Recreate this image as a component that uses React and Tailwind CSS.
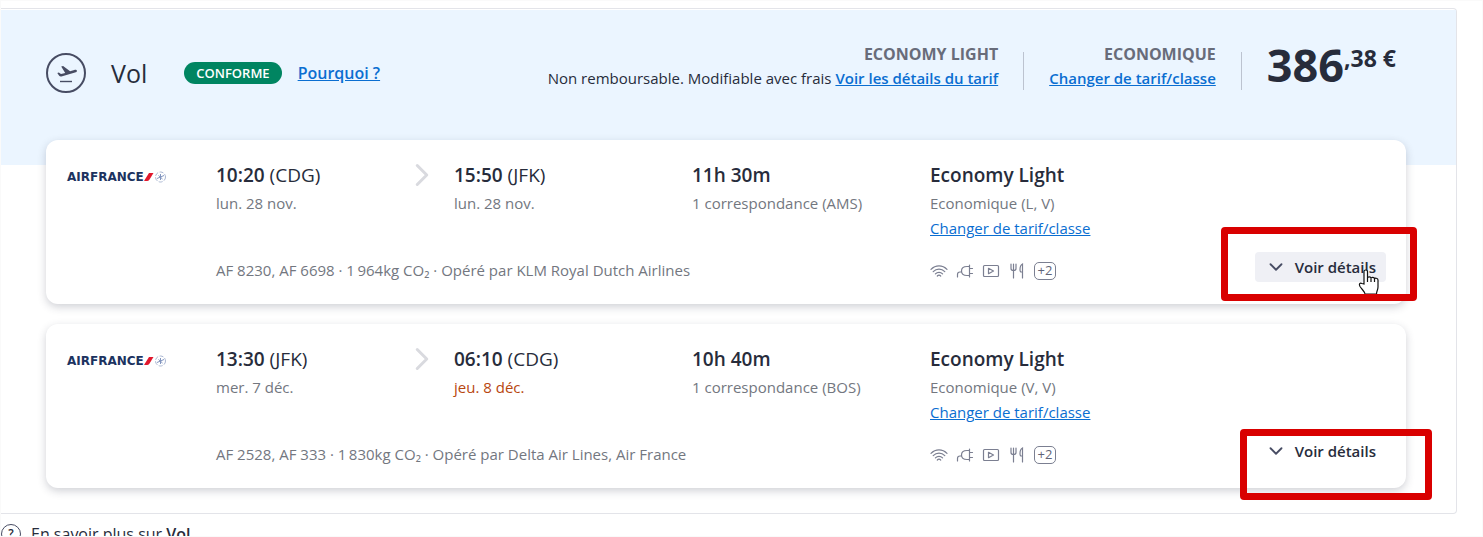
import { ChevronDown, ChevronRight } from "lucide-react";

const flights = [
  {
    id: 1,
    departure: { time: "10:20", airport: "CDG", date: "lun. 28 nov." },
    arrival: { time: "15:50", airport: "JFK", date: "lun. 28 nov." },
    duration: "11h 30m",
    stops: "1 correspondance (AMS)",
    cabin: "Economique (L, V)",
    summary: "AF 8230, AF 6698 · 1\u2009964kg CO₂ · Opéré par KLM Royal Dutch Airlines",
    hovered: true,
  },
  {
    id: 2,
    departure: { time: "13:30", airport: "JFK", date: "mer. 7 déc." },
    arrival: { time: "06:10", airport: "CDG", date: "jeu. 8 déc.", nextDay: true },
    duration: "10h 40m",
    stops: "1 correspondance (BOS)",
    cabin: "Economique (V, V)",
    summary: "AF 2528, AF 333 · 1\u2009830kg CO₂ · Opéré par Delta Air Lines, Air France",
    hovered: false,
  },
];

function PlaneBadge() {
  return (
    <svg width="40" height="40" viewBox="0 0 40 40" fill="none" className="shrink-0">
      <circle cx="20" cy="20" r="19" stroke="#474c63" strokeWidth="2" />
      <path
        d="M11.300 19.900l1.500-.4 2.200 1.600 4.200-1.200-4-6.400 1.900-.5 7 5.200 4.200-1.200c1.300-.3 2.400-.1 2.600.7.200.9-.7 1.500-1.900 1.900l-13.600 3.900c-1 .2-1.700 0-2.200-.7z"
        fill="#474c63"
      />
      <path d="M14 28.500h12" stroke="#474c63" strokeWidth="1.400" />
    </svg>
  );
}

function AirFranceLogo() {
  return (
    <div className="flex items-center">
      <span className="font-['DejaVu_Sans'] text-[12px] leading-4 font-bold text-[#1c3360]">
        AIRFRANCE
      </span>
      <svg width="22" height="14" viewBox="0 0 22 14" fill="none" className="shrink-0">
        <path d="M0 11L5 3h4.500l-4 6.500Q4.500 11 3 11z" fill="#e1182d" />
        <g stroke="#a9b6d2">
          <circle cx="16.500" cy="7" r="5" strokeDasharray="4 1.500" />
          <path d="M13 8.500l7-3M14.500 5.500l4 3.500M16.500 4v6" stroke="#8295bf" />
        </g>
      </svg>
    </div>
  );
}

function Amenities() {
  return (
    <div className="flex h-[18px] items-center gap-2 text-[#7b7f91]">
      <svg width="18" height="18" viewBox="0 0 18 18" fill="none" stroke="currentColor" strokeWidth="1.200" strokeLinecap="round">
        <path d="M1 7.300C5.500 2.600 12.500 2.600 17 7.300M3.200 9.600c3.300-3.400 8.300-3.400 11.600 0M5.400 11.900c2.100-2.100 5.100-2.100 7.200 0M7.300 14c1.100-1 2.300-1 3.400 0" />
      </svg>
      <svg width="18" height="18" viewBox="0 0 18 18" fill="none" stroke="currentColor" strokeWidth="1.200" strokeLinecap="round">
        <path d="M1.500 15v-2.500c0-1.800.9-2.500 2.400-2.500H5.500M13.500 3v12M13.500 4.500H11C7.500 4.500 5.500 6.500 5.500 9s2 4.500 5.500 4.500h2.500M14 6.500h2.500M14 11.500h2.500" />
      </svg>
      <svg width="18" height="18" viewBox="0 0 18 18" fill="none" stroke="currentColor" strokeWidth="1.200" strokeLinejoin="round">
        <rect x="1.500" y="3.500" width="15" height="11" rx="1" />
        <path d="M6.500 6.300v5.400L11.500 9z" />
      </svg>
      <svg width="18" height="18" viewBox="0 0 18 18" fill="none" stroke="currentColor" strokeWidth="1.200" strokeLinecap="round">
        <path d="M3 2v4.500C3 8 4 8.500 5.500 8.500S8 8 8 6.500V2M5.500 2v14M14.500 16V2c-1.700.8-2.500 3-2.500 5.500 0 1.600.5 2.500 1.200 2.500h1.300" />
      </svg>
      <span className="flex h-[18px] w-[22px] items-center justify-center rounded-[5px] border border-[#7b7f91] text-[13px] text-[#5f6478]">
        +2
      </span>
    </div>
  );
}

function HandCursor() {
  return (
    <svg
      width="22"
      height="26"
      viewBox="0 0 22 26"
      className="pointer-events-none absolute top-[17px] right-[7px] z-10"
    >
      <path
        d="M7 15V2.500C7 .5 10.500.5 10.500 2.500V9c0-1.500 3.500-1.500 3.500.5 0-1.500 3.500-1.500 3.500.5 0-1.300 3.500-1 3.500 1V18c0 3-1.500 4-1.500 7H8c0-2-3-4.500-5-7.500-1.500-2.500 0-4 2-3z"
        fill="#fff"
        stroke="#111"
        strokeWidth="1.200"
      />
      <path d="M10.500 9v4M14 9.500V13M17.500 10v3" stroke="#111" strokeWidth="1.200" />
    </svg>
  );
}

function Stop({ time, airport, date, nextDay }) {
  return (
    <div>
      <p className="text-[19px] leading-7 text-[#272c3b]">
        <span className="font-semibold">{time}</span> ({airport})
      </p>
      <p
        className={`text-[15px] leading-7 ${
          nextDay ? "text-[#b8470f]" : "text-[#73777f]"
        }`}
      >
        {date}
      </p>
    </div>
  );
}

function FlightCard({ flight }) {
  return (
    <article className="relative flex rounded-xl bg-white pt-[21px] pb-5 shadow-[0_3px_8px_rgba(40,44,70,0.22)]">
      <div className="w-[170px] shrink-0 pt-2 pl-[21px]">
        <AirFranceLogo />
      </div>

      <div className="grid flex-1 grid-cols-5">
        <div className="flex justify-between pr-[13px]">
          <Stop {...flight.departure} />
          <ChevronRight size={38} strokeWidth={3} absoluteStrokeWidth className="-mt-[5px] text-[#d9dadf]" />
        </div>

        <Stop {...flight.arrival} />

        <div>
          <p className="text-[19px] leading-7 font-semibold text-[#272c3b]">{flight.duration}</p>
          <p className="text-[15px] leading-7 text-[#73777f]">{flight.stops}</p>
        </div>

        <div className="col-span-2">
          <p className="text-[19px] leading-7 font-semibold text-[#272c3b]">Economy Light</p>
          <p className="text-[15px] leading-7 text-[#73777f]">{flight.cabin}</p>
          <a href="#tarif" className="block text-[15px] leading-[22px] text-[#0a6ed1] underline">
            Changer de tarif/classe
          </a>
        </div>

        <p className="col-span-3 self-end text-[15px] leading-7 text-[#73777f]">
          {flight.summary}
        </p>

        <div className="self-end pb-1">
          <Amenities />
        </div>

        <div className="mt-[13px] flex justify-end pr-5 pb-[2px]">
          <div className="relative">
            <button
              type="button"
              className={`flex h-[30px] items-center gap-2 rounded px-[10px] text-[15px] font-semibold text-[#272c3b] ${
                flight.hovered ? "bg-[#eff0f5]" : "bg-white"
              }`}
            >
              <ChevronDown size={22} className="text-[#474c63]" />
              Voir détails
            </button>
            {flight.hovered && <HandCursor />}
          </div>
        </div>
      </div>

      {/* Highlight frame around the details button */}
      <div
        className={`pointer-events-none absolute z-20 rounded border-[7px] border-[#d90000] ${
          flight.hovered
            ? "-right-[11px] bottom-[3px] h-[74px] w-[196px]"
            : "-right-[26px] -bottom-3 h-[71px] w-[192px]"
        }`}
      />
    </article>
  );
}

export default function App() {
  return (
    <div className="h-screen overflow-hidden border border-[#fafafa] bg-white pt-[7px] font-['Open_Sans',sans-serif]">
      <section className="mr-[25px] rounded-r border border-l-0 border-[#e3e4e9] pt-px pb-[25px]">
        <header className="flex h-[155px] items-start bg-[#ebf5ff] pr-[60px] pl-[45px]">
          <div className="flex flex-1 items-center pt-[43px]">
            <PlaneBadge />
            <h1 className="ml-[25px] text-[25px] leading-8 font-medium text-[#272c3b]">Vol</h1>
            <span className="ml-[37px] rounded-full bg-[#008561] px-3 text-[13px] leading-[22px] font-semibold text-white">
              CONFORME
            </span>
            <a href="#pourquoi" className="ml-4 text-base font-semibold text-[#0a6ed1] underline">
              Pourquoi ?
            </a>
          </div>

          <div className="mt-8 pr-[25px] text-right text-[15px] leading-6">
            <p className="text-base font-bold text-[#686c7a]">ECONOMY LIGHT</p>
            <p className="text-[#272c3b]">
              Non remboursable. Modifiable avec frais{" "}
              <a href="#details-tarif" className="font-semibold text-[#0a6ed1] underline">
                Voir les détails du tarif
              </a>
            </p>
          </div>

          <div className="mt-[42px] h-[38px] w-px bg-[#bcc3d0]" />

          <div className="mt-8 px-[25px] text-right text-[15px] leading-6">
            <p className="text-base font-bold text-[#686c7a]">ECONOMIQUE</p>
            <a href="#classe" className="font-semibold text-[#0a6ed1] underline">
              Changer de tarif/classe
            </a>
          </div>

          <div className="mt-[42px] h-[38px] w-px bg-[#bcc3d0]" />

          <p className="mt-7 flex items-start pl-[25px] font-bold text-[#272c3b]">
            <span className="text-[45px] leading-[54px]">386</span>
            <span className="pt-1 text-[23px] leading-8">,38 €</span>
          </p>
        </header>

        <div className="-mt-[25px] mr-[50px] ml-[45px] space-y-5">
          {flights.map((flight) => (
            <FlightCard key={flight.id} flight={flight} />
          ))}
        </div>
      </section>

      <a href="#aide" className="mt-2 flex items-center gap-[10px] text-base leading-6 text-[#272c3b]">
        <span className="flex size-5 items-center justify-center rounded-full border border-[#474c63] text-xs font-semibold">
          ?
        </span>
        <span>
          En savoir plus sur <b className="font-semibold">Vol</b>
        </span>
      </a>
    </div>
  );
}
